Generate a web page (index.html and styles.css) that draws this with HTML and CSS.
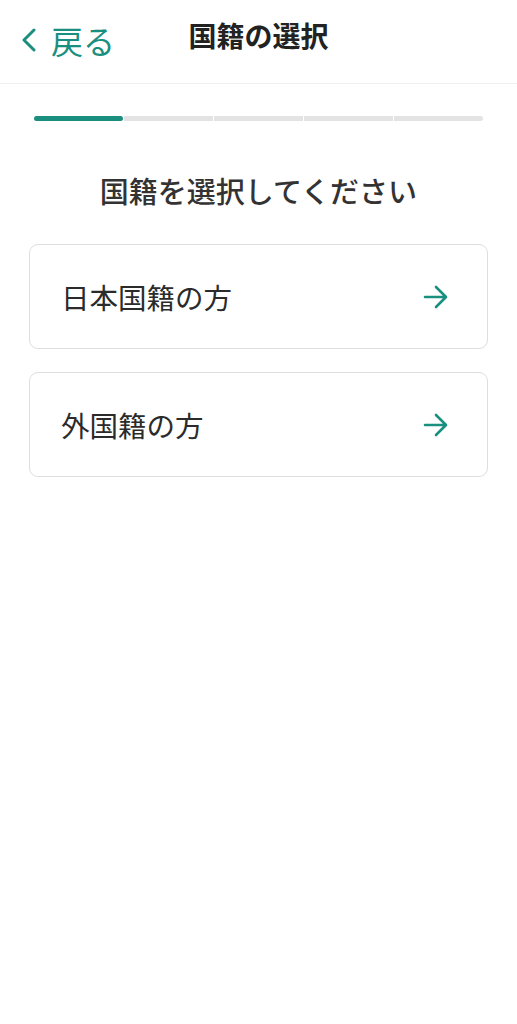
FILE: index.html
```html
<!DOCTYPE html>
<html lang="ja">
<head>
    <meta charset="UTF-8">
    <meta name="viewport" content="width=device-width, initial-scale=1.0">
    <title>国籍の選択</title>
    <link rel="stylesheet" href="styles.css">
</head>
<body>
    <header class="header">
        <a href="#" class="back">
            <svg class="back-icon" width="16" height="24" viewBox="0 0 16 24">
                <path d="M13 2 L3 12 L13 22" fill="none" stroke="currentColor" stroke-width="3" stroke-linecap="round" stroke-linejoin="round"/>
            </svg>
            <span>戻る</span>
        </a>
        <h1 class="title">国籍の選択</h1>
    </header>

    <div class="progress">
        <div class="step done"></div>
        <div class="step"></div>
        <div class="step"></div>
        <div class="step"></div>
        <div class="step"></div>
    </div>

    <main class="content">
        <h2 class="lead">国籍を選択してください</h2>

        <a href="#" class="option">
            <span>日本国籍の方</span>
            <svg class="arrow" width="26" height="24" viewBox="0 0 26 24">
                <path d="M2 12 H23 M13 2 L23 12 L13 22" fill="none" stroke="currentColor" stroke-width="2.6" stroke-linecap="round" stroke-linejoin="round"/>
            </svg>
        </a>
        <a href="#" class="option">
            <span>外国籍の方</span>
            <svg class="arrow" width="26" height="24" viewBox="0 0 26 24">
                <path d="M2 12 H23 M13 2 L23 12 L13 22" fill="none" stroke="currentColor" stroke-width="2.6" stroke-linecap="round" stroke-linejoin="round"/>
            </svg>
        </a>
    </main>
</body>
</html>
```

FILE: styles.css
```css
:root {
    --main-color: #1a8f80;
    --text: #2b2b2b;
    --line: #e8e8e8;
}

* {
    margin: 0;
    padding: 0;
    box-sizing: border-box;
    text-decoration: none;
}

body {
    background: #fff;
    color: var(--text);
    font-family: "Noto Sans CJK JP", "Noto Sans", sans-serif;
}

.header {
    position: relative;
    height: 84px;
    border-bottom: 1px solid #efefef;
    display: flex;
    align-items: center;
    justify-content: center;
}

.back {
    position: absolute;
    left: 21px;
    top: 18px;
    display: flex;
    align-items: center;
    gap: 14px;
    color: var(--main-color);
    font-size: 32px;
    line-height: 44px;
}

.back-icon {
    display: block;
}

.title {
    font-size: 28px;
    font-weight: 700;
    margin-top: -13px;
    color: #222;
}

.progress {
    display: flex;
    gap: 1px;
    margin: 32px 34px 0 34px;
}

.step {
    flex: 1;
    height: 5px;
    background: #e3e3e3;
}

.step:first-child {
    border-radius: 3px 0 0 3px;
}

.step:last-child {
    border-radius: 0 3px 3px 0;
}

.step.done {
    background: var(--main-color);
    border-radius: 3px;
}

.content {
    padding: 0 29px;
    display: flex;
    flex-direction: column;
    gap: 23px;
}

.lead {
    font-size: 29px;
    font-weight: 500;
    text-align: center;
    margin-top: 48px;
    margin-bottom: 10px;
    color: #333;
}

.option {
    display: flex;
    align-items: center;
    justify-content: space-between;
    height: 105px;
    padding: 0 38px 0 31px;
    border: 1.5px solid #dedede;
    border-radius: 9px;
    color: var(--text);
    font-size: 28.5px;
}

.arrow {
    color: var(--main-color);
    display: block;
}
```
